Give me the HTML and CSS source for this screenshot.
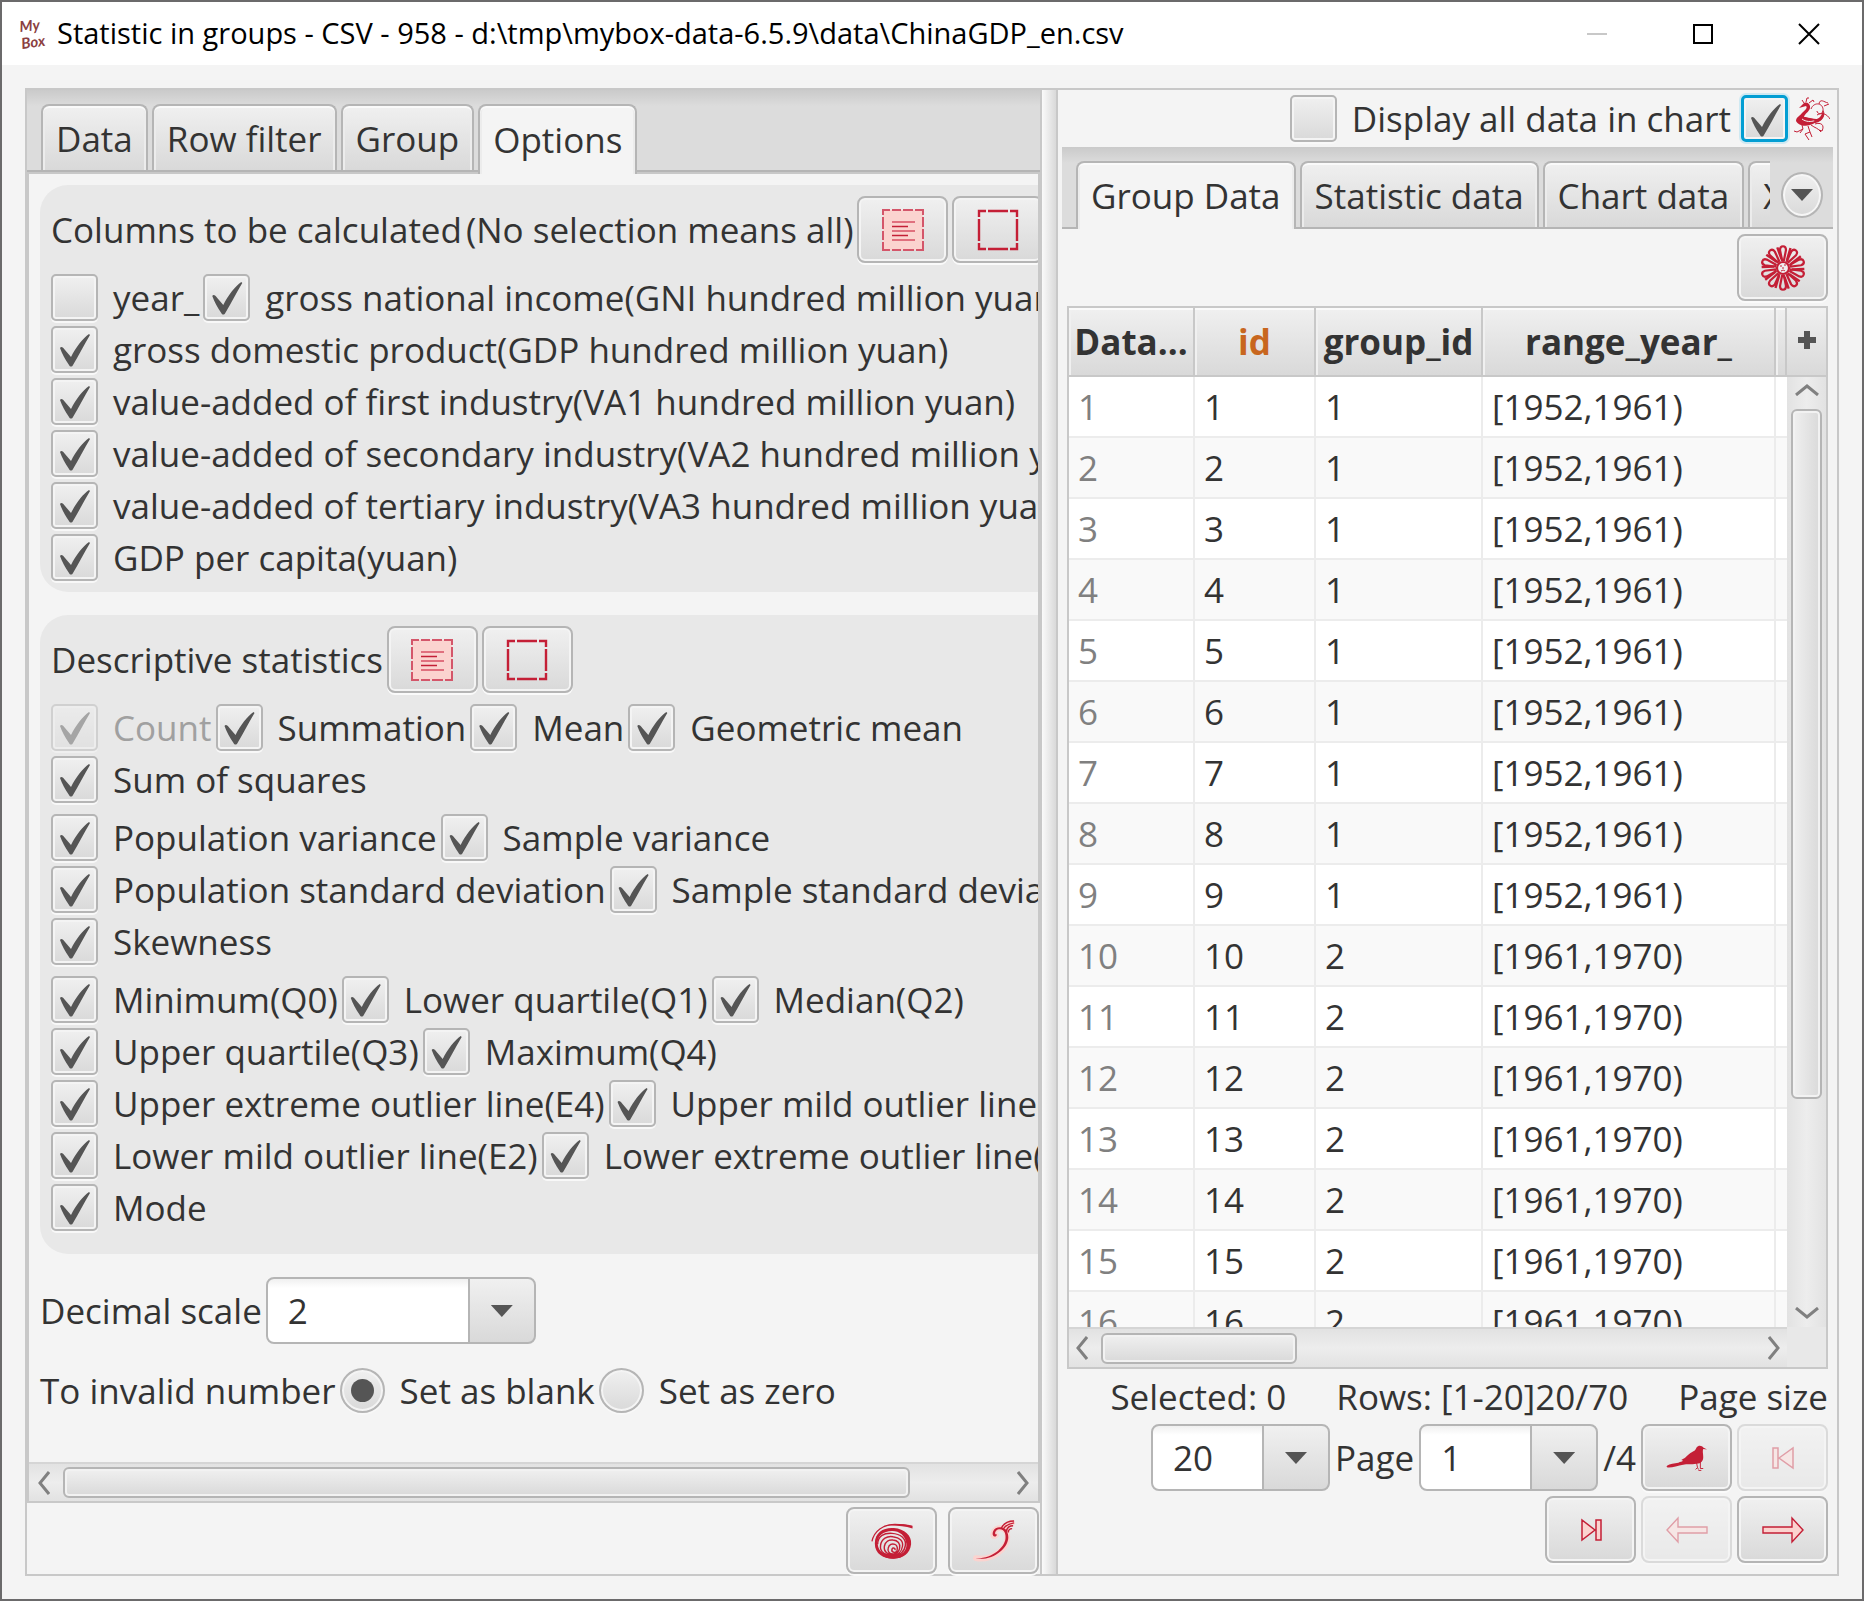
FILE: index.html
```html
<!DOCTYPE html>
<html lang="en">
<head>
<meta charset="utf-8">
<title>Statistic in groups</title>
<link rel="stylesheet" href="styles.css">
</head>
<body>
<svg class="defs" aria-hidden="true">
  <symbol id="i-all" viewBox="0 0 42 42">
    <rect x="1" y="1" width="40" height="40" fill="#fbd3cf"/>
    <path d="M1 6V1H8M10 1H19M21 1H31M33 1H41V6M41 8V18M41 20V30M41 32V41H34M32 41H21M19 41H10M8 41H1V33M1 31V22M1 20V8" fill="none" stroke="#d4566a" stroke-width="2"/>
    <path d="M10 13H33M10 22H33M10 31H33" stroke="#e0707e" stroke-width="2"/><path d="M10 17.500H26M10 26.500H26" stroke="#c41f36" stroke-width="1.500"/>
  </symbol>
  <symbol id="i-none" viewBox="0 0 42 42">
    <path d="M2 8V2H9M11 2H31M33 2H40V8M40 10V32M40 34V40H33M31 40H11M9 40H2V34M2 32V10" fill="none" stroke="#c41f36" stroke-width="2.400"/>
  </symbol>
  <symbol id="i-first" viewBox="0 0 42 42">
    <path d="M11 11H16V31H11ZM17 21L31 11V31Z" fill="#fbd3cf" stroke="#c41f36" stroke-width="1.500"/>
  </symbol>
  <symbol id="i-last" viewBox="0 0 42 42">
    <path d="M31 11H26V31H31ZM25 21L12 11V31Z" fill="#fbd3cf" stroke="#c41f36" stroke-width="1.500"/>
  </symbol>
  <symbol id="i-left" viewBox="0 0 42 42">
    <path d="M1 21L12 9V18H41V24H12V33Z" fill="#fbd3cf" stroke="#c41f36" stroke-width="1.400"/>
  </symbol>
  <symbol id="i-right" viewBox="0 0 42 42">
    <path d="M41 21L30 9V18H1V24H30V33Z" fill="#fbd3cf" stroke="#c41f36" stroke-width="1.400"/>
  </symbol>
  <symbol id="i-bird" viewBox="0 0 44 28">
    <path d="M1 22C4 20 9 20 13 19C15 18 17 18 18 17L16 16C21 14 23 10 27 8C31 6 31 5 32 3C34 0 38 1 39 3L43 5L39 4.500C38 7 39 9 39 13C39 17 37 20 32 20C26 21 22 20 18 21C13 22 7 24 3 24C1 24 0 23 1 22Z" fill="#c41f36"/>
    <path d="M32 19L33 24M31 26L33 24L34 26M36 18V25L39 25M34 27H37" fill="none" stroke="#c41f36"/>
  </symbol>
  <symbol id="i-spiral" viewBox="0 0 44 37">
    <path d="M1 19C3 8 13 1 25 1C32 1 38 2 43 3.500" fill="none" stroke="#c41f36" stroke-width="1.300"/>
    <path d="M16 2.500C24 -.5 36 .5 43.500 2.500V5.500C34 2.500 25 2 16 2.500Z" fill="#c41f36"/>
    <path fill-rule="evenodd" d="M4 21C4 9 14 4 24 5C35 6 43 13 42 22C41 32 33 37 24 37C13 37 4 32 4 21ZM7 22C8 30 14 34 23 34C33 34 38 28 37 21C36 13 30 8 22 8C13 8 6 13 7 22Z" fill="#c41f36"/>
    <path d="M7 22C7 13 14 10 22 10.500C31 11 37 16 36 23C35 30 30 34 24 34C15 34 9 30 10 23C11 16 17 13 23 14C30 15 34 18 33 24C32 30 28 33 24 33C18 33 13 30 14 24C15 19 19 17 23 17.500C28 18 31 21 30 26C29 31 26 32 23 32C19 32 17 29 18 26C19 22 22 21 25 22C28 23 28 27 27 29C25 32 21 30 22 27C23 25 26 26 25 28" fill="none" stroke="#c41f36" stroke-width="1.500"/>
    <path d="M8 28C13 34 18 30 24 34C29 32 34 33 38 28C35 36 28 37 23 37C16 37 11 35 8 28Z" fill="#c41f36"/>
  </symbol>
  <symbol id="i-plume" viewBox="0 0 44 44">
    <g fill="none" stroke="#fbd3cf" stroke-width="6" stroke-linecap="round" stroke-linejoin="round"><path d="M3 40C20 43 36 30 36 18C36 8 27 6 22 12C20 17 22 18 24 16M32 8L41 3"/></g>
    <path d="M1 40C20 44 37 30 37 18C37 6 24 5 21 12C19 18 25 19 25 15C22 16 23 11 26 10C32 8 35 14 34 20C33 29 19 42 1 40Z" fill="#c41f36"/>
    <path d="M30 8C32 4 35 1 43 1M32 9C34 6 36 4 43 3M35 11C36 8 38 6 42 6M37 13C37 10 39 9 41 9M29 8L36 12" fill="none" stroke="#c41f36" stroke-width="1.500"/>
  </symbol>
  <symbol id="i-flower" viewBox="-23 -23 46 46">
    <g fill="none" stroke="#c41f36">
      <g id="petal"><path d="M-1 -8L-3 -18C-3 -23 3 -23 3 -18L1 -8Z" stroke-width="2.200"/><path d="M4 -8L7.500 -20" stroke-width="2.400"/></g>
      <use href="#petal" transform="rotate(36)"/><use href="#petal" transform="rotate(72)"/><use href="#petal" transform="rotate(108)"/><use href="#petal" transform="rotate(144)"/><use href="#petal" transform="rotate(180)"/><use href="#petal" transform="rotate(216)"/><use href="#petal" transform="rotate(252)"/><use href="#petal" transform="rotate(288)"/><use href="#petal" transform="rotate(324)"/>
    </g>
    <circle r="6" fill="#efefef" stroke="#c41f36" stroke-width="2.200"/>
    <path d="M-3 -2H-1M1 -3H3M-2 3C0 2 1 2 2 3M0 -1V1" stroke="#c41f36" fill="none"/>
  </symbol>
  <symbol id="i-phoenix" viewBox="0 0 36 44">
    <path d="M9 7C12 4 15 6 16 9C17 14 11 16 10 20C14 20 17 22 25 22C23 25 20 27 16 28C10 30 4 28 2 24C2 20 6 19 8 16C11 13 14 11 12 9L5 11Z" fill="#c41f36"/>
    <path d="M8 22C12 25 17 25 21 23.500" fill="none" stroke="#f4f4f4"/>
    <path d="M10 6L8 3M12 5L13 1L15 1M15 6L19 3L20 5M17 12C20 4 30 6 29 14C28 18 23 17 23 14M29 14C32 18 27 25 22 24M23 18C28 15 33 17 36 22M21 27C27 25 31 28 28 34L25 33M17 28C21 31 24 31 27 35M25 7C26 1 30 5 34 6M30 9L35 7M14 29L16 35L11 37L15 43M16 35L18 40M8 28L9 32L3 35L0 34M9 32L6 36" fill="none" stroke="#c41f36" stroke-width="1"/>
    <path d="M20 23C25 22 28 19 29 13L30 17C30 21 27 25 21 26Z" fill="#c41f36"/>
  </symbol>
</svg>

<header class="titlebar">
  <svg class="logo" viewBox="0 0 30 30" role="img" aria-label="MyBox"><g font-family="Lato, sans-serif" font-style="italic" font-weight="700" fill="#8b3f42"><text x="0" y="13" font-size="15" transform="rotate(-6 0 13)">My</text><text x="2" y="30" font-size="15" transform="rotate(-8 2 30)">Box</text></g></svg>
  <h1 class="title">Statistic in groups - CSV - 958 - d:\tmp\mybox-data-6.5.9\data\ChinaGDP_en.csv</h1>
  <button class="winbtn" aria-label="Minimize" disabled><svg viewBox="0 0 22 22"><path d="M1 11H21" stroke="#c8c8c8" stroke-width="2"/></svg></button>
  <button class="winbtn" aria-label="Maximize"><svg viewBox="0 0 22 22"><rect x="2" y="2" width="18" height="18" fill="none" stroke="#000" stroke-width="2"/></svg></button>
  <button class="winbtn" aria-label="Close"><svg viewBox="0 0 22 22"><path d="M1 1L21 21M21 1L1 21" stroke="#000" stroke-width="2"/></svg></button>
</header>

<main class="frame">
  <section class="left">
    <nav class="tabs tabs-left">
      <div class="tablist">
        <button class="tab">Data</button><button class="tab">Row filter</button><button class="tab">Group</button><button class="tab active">Options</button>
      </div>
    </nav>
    <div class="scrollpane">
      <div class="options">
        <div class="group">
          <div class="line head"><span>Columns to be calculated</span><span>(No selection means all)</span>
            <button class="btn" aria-label="Select all columns"><svg class="ico"><use href="#i-all"/></svg></button>
            <button class="btn" aria-label="Select no columns"><svg class="ico"><use href="#i-none"/></svg></button></div>
          <div class="rows">
            <div class="line"><label class="check"><input type="checkbox">year_</label><label class="check"><input type="checkbox" checked>gross national income(GNI hundred million yuan)</label></div>
            <div class="line"><label class="check"><input type="checkbox" checked>gross domestic product(GDP hundred million yuan)</label></div>
            <div class="line"><label class="check"><input type="checkbox" checked>value-added of first industry(VA1 hundred million yuan)</label></div>
            <div class="line"><label class="check"><input type="checkbox" checked>value-added of secondary industry(VA2 hundred million yuan)</label></div>
            <div class="line"><label class="check"><input type="checkbox" checked>value-added of tertiary industry(VA3 hundred million yuan)</label></div>
            <div class="line"><label class="check"><input type="checkbox" checked>GDP per capita(yuan)</label></div>
          </div>
        </div>
        <div class="group group-stats">
          <div class="line head"><span>Descriptive statistics</span>
            <button class="btn" aria-label="Select all statistics"><svg class="ico"><use href="#i-all"/></svg></button>
            <button class="btn" aria-label="Select no statistics"><svg class="ico"><use href="#i-none"/></svg></button></div>
          <div class="rows">
            <div class="line"><label class="check"><input type="checkbox" checked disabled>Count</label><label class="check"><input type="checkbox" checked>Summation</label><label class="check"><input type="checkbox" checked>Mean</label><label class="check"><input type="checkbox" checked>Geometric mean</label></div>
            <div class="line"><label class="check"><input type="checkbox" checked>Sum of squares</label></div>
          </div>
          <div class="rows">
            <div class="line"><label class="check"><input type="checkbox" checked>Population variance</label><label class="check"><input type="checkbox" checked>Sample variance</label></div>
            <div class="line"><label class="check"><input type="checkbox" checked>Population standard deviation</label><label class="check"><input type="checkbox" checked>Sample standard deviation</label></div>
            <div class="line"><label class="check"><input type="checkbox" checked>Skewness</label></div>
          </div>
          <div class="rows">
            <div class="line"><label class="check"><input type="checkbox" checked>Minimum(Q0)</label><label class="check"><input type="checkbox" checked>Lower quartile(Q1)</label><label class="check"><input type="checkbox" checked>Median(Q2)</label></div>
            <div class="line"><label class="check"><input type="checkbox" checked>Upper quartile(Q3)</label><label class="check"><input type="checkbox" checked>Maximum(Q4)</label></div>
            <div class="line"><label class="check"><input type="checkbox" checked>Upper extreme outlier line(E4)</label><label class="check"><input type="checkbox" checked>Upper mild outlier line(E3)</label></div>
            <div class="line"><label class="check"><input type="checkbox" checked>Lower mild outlier line(E2)</label><label class="check"><input type="checkbox" checked>Lower extreme outlier line(E1)</label></div>
            <div class="line"><label class="check"><input type="checkbox" checked>Mode</label></div>
          </div>
        </div>
        <div class="line"><label for="scale">Decimal scale</label><span class="combo wide"><select id="scale"><option>2</option></select></span></div>
        <div class="line"><span>To invalid number</span><label class="check"><input type="radio" name="invalid" checked>Set as blank</label><label class="check"><input type="radio" name="invalid">Set as zero</label></div>
      </div>
      <div class="hbar"><svg class="arrow" viewBox="0 0 12 24"><path d="M11 1L2 12L11 23"/></svg><div class="track"><div class="thumb options-thumb"></div></div><svg class="arrow" viewBox="0 0 12 24"><path d="M1 1L10 12L1 23"/></svg></div>
    </div>
    <div class="footer">
      <button class="btn" aria-label="Cancel"><svg class="ico"><use href="#i-spiral"/></svg></button>
      <button class="btn" aria-label="Start"><svg class="ico"><use href="#i-plume"/></svg></button>
    </div>
  </section>

  <div class="splitter"></div>

  <section class="right">
    <div class="chartbar">
      <label class="check"><input type="checkbox">Display all data in chart</label>
      <input class="focused" type="checkbox" checked aria-label="Show right pane">
      <svg class="phoenix"><use href="#i-phoenix"/></svg>
    </div>
    <nav class="tabs">
      <div class="tablist">
        <button class="tab active">Group Data</button><button class="tab">Statistic data</button><button class="tab">Chart data</button><button class="tab">XY Chart</button>
      </div>
      <div class="more"><button class="round" aria-label="More tabs"><svg viewBox="0 0 22 12"><path d="M0 0H22L11 12Z" fill="#555"/></svg></button></div>
    </nav>
    <div class="panel">
      <div class="tools"><button class="btn" aria-label="Functions"><svg class="ico big"><use href="#i-flower"/></svg></button></div>
      <div class="tableview">
        <div class="viewport">
          <table>
            <colgroup><col class="c-row"><col class="c-id"><col class="c-group"><col class="c-range"><col class="c-rest"></colgroup>
            <thead><tr><th>Data...</th><th class="key">id</th><th>group_id</th><th>range_year_</th><th></th></tr></thead>
            <tbody>
              <tr><td>1</td><td>1</td><td>1</td><td>[1952,1961)</td><td></td></tr>
              <tr><td>2</td><td>2</td><td>1</td><td>[1952,1961)</td><td></td></tr>
              <tr><td>3</td><td>3</td><td>1</td><td>[1952,1961)</td><td></td></tr>
              <tr><td>4</td><td>4</td><td>1</td><td>[1952,1961)</td><td></td></tr>
              <tr><td>5</td><td>5</td><td>1</td><td>[1952,1961)</td><td></td></tr>
              <tr><td>6</td><td>6</td><td>1</td><td>[1952,1961)</td><td></td></tr>
              <tr><td>7</td><td>7</td><td>1</td><td>[1952,1961)</td><td></td></tr>
              <tr><td>8</td><td>8</td><td>1</td><td>[1952,1961)</td><td></td></tr>
              <tr><td>9</td><td>9</td><td>1</td><td>[1952,1961)</td><td></td></tr>
              <tr><td>10</td><td>10</td><td>2</td><td>[1961,1970)</td><td></td></tr>
              <tr><td>11</td><td>11</td><td>2</td><td>[1961,1970)</td><td></td></tr>
              <tr><td>12</td><td>12</td><td>2</td><td>[1961,1970)</td><td></td></tr>
              <tr><td>13</td><td>13</td><td>2</td><td>[1961,1970)</td><td></td></tr>
              <tr><td>14</td><td>14</td><td>2</td><td>[1961,1970)</td><td></td></tr>
              <tr><td>15</td><td>15</td><td>2</td><td>[1961,1970)</td><td></td></tr>
              <tr><td>16</td><td>16</td><td>2</td><td>[1961,1970)</td><td></td></tr>
            </tbody>
          </table>
        </div>
        <div class="side">
          <button class="addcol" aria-label="Choose columns"><svg viewBox="0 0 18 18"><path d="M6 0H12V6H18V12H12V18H6V12H0V6H6Z" fill="#555"/></svg></button>
          <div class="vbar"><svg class="varrow" viewBox="0 0 24 12"><path d="M1 11L12 2L23 11"/></svg><div class="vtrack"><div class="thumb rows-thumb"></div></div><svg class="varrow" viewBox="0 0 24 12"><path d="M1 1L12 10L23 1"/></svg></div>
        </div>
        <div class="hbar"><svg class="arrow" viewBox="0 0 12 24"><path d="M11 1L2 12L11 23"/></svg><div class="track"><div class="thumb table-thumb"></div></div><svg class="arrow" viewBox="0 0 12 24"><path d="M1 1L10 12L1 23"/></svg></div>
        <div class="corner"></div>
      </div>
      <div class="pager">
        <div class="line summary"><span>Selected: 0</span><span>Rows: [1-20]20/70</span><label for="psize">Page size</label></div>
        <div class="line">
          <span class="combo"><select id="psize"><option>20</option></select></span>
          <label for="page">Page</label><span class="combo"><select id="page"><option>1</option></select></span><span>/4</span>
          <button class="btn" aria-label="Go to page"><svg class="ico"><use href="#i-bird"/></svg></button>
          <button class="btn" aria-label="First page" disabled><svg class="ico"><use href="#i-first"/></svg></button>
        </div>
        <div class="line">
          <button class="btn" aria-label="Last page"><svg class="ico"><use href="#i-last"/></svg></button>
          <button class="btn" aria-label="Previous page" disabled><svg class="ico"><use href="#i-left"/></svg></button>
          <button class="btn" aria-label="Next page"><svg class="ico"><use href="#i-right"/></svg></button>
        </div>
      </div>
    </div>
  </section>
</main>
</body>
</html>
```
FILE: styles.css
```css
:root {
  --line: #c8c8c8;
  --edge: #b5b5b5;
  --ink: #333;
  --face: linear-gradient(#f0f0f0, #d9d9d9);
}
* { box-sizing: border-box; }
body {
  margin: 0;
  height: 100vh;
  display: flex;
  flex-direction: column;
  border: 2px solid #6b6a6b;
  background: #f4f4f4;
  color: var(--ink);
  font: 35px/47px "Open Sans", "Noto Sans", sans-serif;
  white-space: nowrap;
  overflow: hidden;
}
.defs { display: none; }
button, select, input { font: inherit; color: inherit; margin: 0; padding: 0; }
svg { display: block; }

/* title bar */
.titlebar { display: flex; align-items: center; height: 63px; flex: none; background: #fff; padding-left: 18px; }
.logo { width: 30px; height: 30px; overflow: visible; }
.title { flex: 1; margin: 0; padding: 0 0 2px 7px; color: #000; font-size: 29px; font-weight: 400; }
.winbtn { width: 106px; height: 60px; border: 0; background: none; display: flex; align-items: center; justify-content: center; }
.winbtn svg { width: 22px; height: 22px; }

/* split frame */
.frame { flex: 1; min-height: 0; display: grid; grid-template: minmax(0, 1fr) / minmax(0, 1015fr) 16px minmax(0, 779fr); margin: 23px; border: 2px solid var(--line); }
.left { display: flex; flex-direction: column; border-right: 2px solid var(--line); min-width: 0; }
.splitter { border-right: 2px solid var(--line); background: linear-gradient(90deg, #fafafa, #d9d9d9); }
.right { min-width: 0; display: flex; flex-direction: column; padding: 0 4px; }

/* tabs */
.tabs {
  flex: none;
  display: flex;
  height: 82px;
  padding: 14px 0 0 14px;
  background: linear-gradient(var(--edge), var(--edge)) bottom / 100% 2px no-repeat, linear-gradient(#cacaca, #dcdcdc 16px);
}
.tabs-left { border-bottom: 2px solid var(--line); height: 84px; }
.tablist { flex: 1; min-width: 0; display: flex; gap: 4px; overflow: hidden; height: 68px; }
.tabs-left .tablist { height: 70px; }
.tab {
  flex: none;
  height: 66px;
  padding: 0 13px;
  border: 2px solid var(--edge);
  border-bottom: 0;
  border-radius: 8px 8px 0 0;
  background: var(--face);
  box-shadow: inset 0 2px #fafafa, inset 2px 0 #ececec, inset -2px 0 #ececec;
}
.tab.active { height: 100%; background: #f4f4f4; padding-bottom: 2px; }
.more { width: 63px; display: flex; justify-content: center; padding-top: 11px; }
.round { width: 42px; height: 46px; border: 2px solid var(--edge); border-radius: 50%; background: var(--face); box-shadow: inset 0 0 0 2px #f6f6f6; display: flex; align-items: center; justify-content: center; }
.round svg { width: 22px; height: 12px; }

/* options pane */
.scrollpane { flex: 1; min-height: 0; display: flex; flex-direction: column; border: solid var(--line); border-width: 0 2px 2px; }
.options { flex: 1; min-height: 0; overflow: hidden; display: flex; flex-direction: column; gap: 23px; padding: 11px 0 0 11px; }
.group { flex: none; display: flex; flex-direction: column; gap: 11px; padding: 11px; border-radius: 28px 0 0 28px; background: #e8e8e8; }
.group-stats { padding-bottom: 23px; }
.rows { display: flex; flex-direction: column; gap: 5px; }
.line { display: flex; align-items: center; gap: 4px; flex: none; }
.line > * { flex: none; }

.check { display: flex; align-items: center; gap: 15px; height: 47px; }
.check:has(:disabled) { color: #a0a0a0; }
input { appearance: none; width: 47px; height: 47px; flex: none; border: 2px solid var(--edge); border-radius: 5px; background: var(--face); box-shadow: inset 0 0 0 2px #f4f4f4, 0 2px #f8f8f8; }
input:disabled { opacity: .45; }
input[type="checkbox"]:checked::before {
  content: "";
  display: block;
  width: 43px;
  height: 43px;
  background: #555;
  clip-path: path("M7 20C8 18 10 19 12 22L18 29C23 19 30 10 36 6L37 7C31 17 26 27 20 37C19 39 17 39 16 37C12 31 9 26 7 20Z");
}
input[type="radio"] { width: 45px; height: 45px; border-radius: 50%; display: flex; align-items: center; justify-content: center; }
input[type="radio"]:checked::before { content: ""; width: 23px; height: 23px; border-radius: 50%; background: #555; }
.focused { border: 3px solid #039ed3; box-shadow: 0 0 0 2px #cfe9f2, inset 0 0 0 2px #f4f4f4; }
input.focused:checked::before { width: 41px; height: 41px; }

.btn { width: 91px; height: 67px; flex: none; display: flex; align-items: center; justify-content: center; border: 2px solid var(--edge); border-radius: 8px; background: var(--face); box-shadow: inset 0 0 0 2px #f4f4f4, 0 2px #fafafa; }
.btn:disabled { opacity: .4; }
.ico { width: 42px; height: 42px; }
.ico.big { width: 46px; height: 46px; }

.combo { position: relative; display: flex; width: 179px; height: 67px; }
.combo.wide { width: 270px; }
.combo select {
  appearance: none;
  width: 100%;
  padding-left: 20px;
  border: 2px solid var(--edge);
  border-radius: 8px;
  background:
    linear-gradient(var(--edge), var(--edge)) right 64px top / 2px 100% no-repeat,
    linear-gradient(#f0f0f0, #d9d9d9) right / 64px 100% no-repeat,
    linear-gradient(#f0f0f0, #fff 9px);
}
.combo::after { content: ""; position: absolute; right: 23px; top: 28px; width: 22px; height: 12px; background: #555; clip-path: polygon(0 0, 100% 0, 50% 100%); pointer-events: none; }

/* scroll bars */
.hbar { height: 39px; flex: none; display: flex; align-items: center; gap: 13px; padding: 0 9px; border-top: 2px solid #d5d5d5; background: linear-gradient(#e2e2e2, #ededed 50%, #e2e2e2); }
.arrow { width: 12px; height: 24px; flex: none; }
.varrow { width: 24px; height: 12px; flex: none; }
.arrow path, .varrow path { fill: none; stroke: #808080; stroke-width: 3; }
.track { flex: 1; height: 31px; }
.thumb { height: 31px; border: 2px solid var(--edge); border-radius: 6px; background: var(--face); box-shadow: inset 0 0 0 2px #f2f2f2; }
.options-thumb { width: 90%; }
.table-thumb { width: 30%; }
.footer { flex: none; display: flex; justify-content: flex-end; gap: 11px; padding: 4px 1px 0 0; }

/* right pane */
.chartbar { flex: none; display: flex; align-items: center; justify-content: flex-end; gap: 6px; height: 57px; padding-right: 3px; }
.chartbar .check { margin-right: 4px; }
.phoenix { width: 36px; height: 44px; }
.panel { flex: 1; min-height: 0; display: flex; flex-direction: column; gap: 5px; padding: 5px 5px 11px; }
.tools { display: flex; justify-content: flex-end; flex: none; }

.tableview { flex: 1; min-height: 0; display: grid; grid-template: minmax(0, 1fr) auto / minmax(0, 1fr) 39px; border: 2px solid var(--line); background: #fff; }
.viewport { overflow: hidden; }
table { table-layout: fixed; border-collapse: separate; border-spacing: 0; width: 100%; }
.c-row { width: 126px; }
.c-id { width: 121px; }
.c-group { width: 167px; }
.c-range { width: 293px; }
th { height: 69px; padding: 0; font-weight: 700; background: var(--face); border: solid var(--line); border-width: 0 2px 2px 0; box-shadow: inset 0 2px #fafafa, inset 2px 0 #f0f0f0; }
th.key { color: #c8661e; }
td { height: 61px; padding: 0 9px; border: solid #ececec; border-width: 0 2px 2px 0; }
td:last-child { padding: 0; border-right: 0; }
td:first-child { color: #808080; }
tr:nth-child(even) td { background: #f9f9f9; }
.side { display: flex; flex-direction: column; min-height: 0; }
.addcol { height: 69px; border: 0; border-bottom: 2px solid var(--line); padding-bottom: 4px; background: var(--face); display: flex; align-items: center; justify-content: center; flex: none; }
.addcol svg { width: 18px; height: 18px; }
.vbar { flex: 1; min-height: 0; display: flex; flex-direction: column; align-items: center; gap: 13px; padding: 7px 0 8px; background: linear-gradient(90deg, #e2e2e2, #ededed 50%, #e2e2e2); }
.vtrack { flex: 1; width: 31px; }
.rows-thumb { height: 78%; background: linear-gradient(90deg, #f0f0f0, #d9d9d9); }
.tableview .hbar { height: 40px; padding: 0 7px; }
.corner { background: #e8e8e8; }

.pager { flex: none; display: flex; flex-direction: column; gap: 5px; }
.pager .line { justify-content: flex-end; gap: 5px; }
.pager .summary { height: 45px; gap: 50px; }
```
